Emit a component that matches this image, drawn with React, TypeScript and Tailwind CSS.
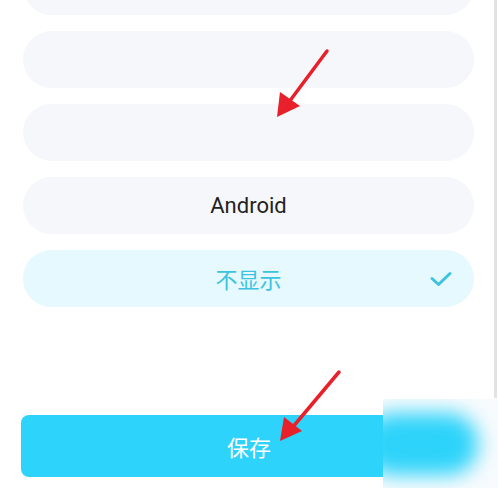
import React from "react";

function Row({ children, active }: { children?: React.ReactNode; active?: boolean }) {
  return (
    <div
      className={`relative h-[57px] rounded-full flex items-center justify-center ${
        active ? "bg-[#e6f9fe]" : "bg-[#f6f7fb]"
      }`}
    >
      {children}
    </div>
  );
}

export default function App() {
  return (
    <div className="relative w-[498px] h-[488px] overflow-hidden bg-white font-['Roboto','Noto_Sans_CJK_SC',sans-serif]">
      <div className="flex flex-col gap-4 pl-[23px] pr-[24px] -mt-[42px]">
        <Row>
          <span className="text-[22px] text-[#333] pl-[60px]">iOS (iPhone)</span>
        </Row>
        <Row />
        <Row />
        <Row>
          <span className="text-[22px] text-[#222]">Android</span>
        </Row>
        <Row active>
          <span className="text-[22px] text-[#3cc3df] font-['Noto_Sans_CJK_SC',sans-serif]">不显示</span>
          <svg className="absolute right-[20px]" width="26" height="18" viewBox="0 0 26 18">
            <path d="M4 8.5 L10.5 14.5 L22 3.5" fill="none" stroke="#3cc3df" strokeWidth="3" strokeLinecap="round" strokeLinejoin="round" />
          </svg>
        </Row>
      </div>

      <div className="mt-[108px] mx-[21px] h-[62px] rounded-[8px] bg-[#2dd3fa] flex items-center justify-center">
        <span className="text-[22px] text-white font-['Noto_Sans_CJK_SC',sans-serif]">保存</span>
      </div>

      {/* right edge line */}
      <div className="absolute right-[1px] top-0 w-[3px] h-[398px] bg-[#e2e2e2]" />

      {/* blurred watermark patch */}
      <div className="absolute left-[383px] top-[399px] w-[115px] h-[89px] bg-[#f7fbfd] overflow-hidden">
        <div className="absolute left-[-20px] top-[14px] w-[115px] h-[62px] rounded-[30px] bg-[#2dd3fa] blur-[10px]" />
      </div>

      {/* annotation arrows */}
      <svg className="absolute left-0 top-0" width="498" height="488" viewBox="0 0 498 488">
        <line x1="327" y1="51" x2="289" y2="102" stroke="#e8202a" strokeWidth="3.5" strokeLinecap="round" />
        <polygon points="277,117 280,92 300,106" fill="#e8202a" />
        <line x1="339" y1="372" x2="292" y2="428" stroke="#e8202a" strokeWidth="3.5" strokeLinecap="round" />
        <polygon points="280,441 284,417 302,431" fill="#e8202a" />
      </svg>
    </div>
  );
}
